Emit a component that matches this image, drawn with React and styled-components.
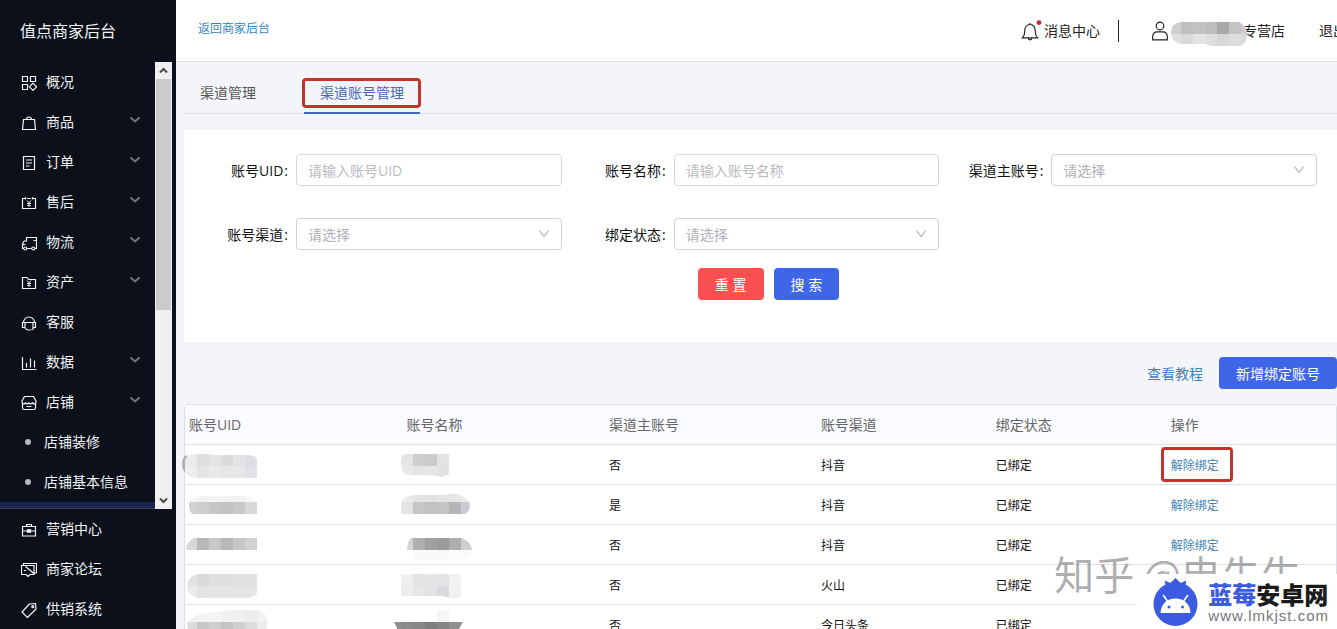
import React, { useId } from 'react';
import styled, { createGlobalStyle } from 'styled-components';

const GlobalStyle = createGlobalStyle`
  *, *::before, *::after { box-sizing: border-box; }
  body {
    margin: 0;
    overflow: hidden;
    font-family: "Open Sans", "Noto Sans CJK SC", sans-serif;
    font-size: 14px;
    line-height: 20px;
    color: #1a1a1a;
    background: #f4f5f9;
  }
  button, input, select { font: inherit; margin: 0; }
  a { text-decoration: none; }
`;

const Shell = styled.div`
  display: flex;
  height: 100vh;
  overflow: hidden;
  position: relative;
`;

/* ---------- sidebar ---------- */

const Sidebar = styled.aside`
  flex: 0 0 176px;
  display: flex;
  flex-direction: column;
  background: #0b101b;
  color: #f2f3f5;
`;

const Brand = styled.div`
  flex: 0 0 62px;
  padding-left: 20px;
  font-size: 16px;
  line-height: 62px;
`;

const MenuViewport = styled.div`
  flex: 1;
  min-height: 0;
  display: flex;
  padding-right: 4px;
`;

const MenuList = styled.nav`
  flex: 1;
  overflow: hidden;
  display: flex;
  flex-direction: column;
  border-bottom: 1px solid #3a3f4b;
`;

const MenuItem = styled.button`
  flex: 0 0 40px;
  display: flex;
  align-items: center;
  gap: 9px;
  width: 100%;
  padding: 0 14px 0 21px;
  border: 0;
  background: none;
  color: inherit;
  text-align: left;
  cursor: pointer;
`;

const MenuLabel = styled.span`
  flex: 1;
`;

const SubItem = styled.a`
  flex: 0 0 40px;
  display: flex;
  align-items: center;
  gap: 13px;
  padding-left: 25px;
  color: inherit;

  &::before {
    content: "";
    width: 6px;
    height: 6px;
    border-radius: 50%;
    background: #b4b8c2;
  }
`;

const ActiveStrip = styled.div`
  flex: 1;
  background: #1a2450;
`;

const Scrollbar = styled.div`
  flex: 0 0 17px;
  display: flex;
  flex-direction: column;
  background: #f0f0f0;
`;

const ScrollArrow = styled.button`
  flex: 0 0 17px;
  display: flex;
  align-items: center;
  justify-content: center;
  padding: 0;
  border: 0;
  background: none;
`;

const ScrollTrack = styled.div`
  flex: 1;
  padding: 0 1px;
`;

const ScrollThumb = styled.div`
  height: 56%;
  background: #cbcbcb;
`;

const BottomMenu = styled.nav`
  flex: 0 0 119px;
  display: flex;
  flex-direction: column;
`;

/* ---------- main ---------- */

const Main = styled.div`
  flex: 1;
  min-width: 0;
  display: flex;
  flex-direction: column;
`;

const Header = styled.header`
  flex: 0 0 62px;
  display: flex;
  align-items: center;
  justify-content: space-between;
  padding-left: 22px;
  overflow: hidden;
  background: #fff;
  border-bottom: 1px solid #dcdde1;
`;

const BackLink = styled.a`
  padding-bottom: 4px;
  font-size: 12px;
  color: #3787bd;
`;

const HeaderNav = styled.div`
  display: flex;
  align-items: center;
  margin-right: -10px;
  white-space: nowrap;
`;

const HeaderItem = styled.button`
  display: flex;
  align-items: center;
  gap: ${(p) => p.$gap || 0}px;
  padding: 0;
  border: 0;
  background: none;
  color: #222;
`;

const Divider = styled.span`
  width: 1px;
  height: 22px;
  margin: 0 33px 0 18px;
  background: #222;
`;

const ShopName = styled.span`
  margin-left: -5px;
  margin-right: 34px;
`;

const Body = styled.main`
  flex: 1;
  padding-left: 8px;
`;

const Tabs = styled.div`
  display: flex;
  gap: 32px;
  height: 52px;
  border-bottom: 1px solid #dfe1e6;
`;

const Tab = styled.button`
  position: relative;
  height: 52px;
  padding: 12px 16px 0;
  border: 0;
  border-bottom: 2px solid ${(p) => (p.$active ? '#4468b8' : 'transparent')};
  background: none;
  color: ${(p) => (p.$active ? '#4468b8' : '#555')};
`;

const Highlight = styled.span`
  position: absolute;
  inset: ${(p) => p.$inset};
  border: 3px solid #c4342c;
  border-radius: 4px;
  pointer-events: none;
`;

const Panel = styled.form`
  margin-top: 16px;
  padding: 24px 20px 42px 0;
  background: #fff;
`;

const Fields = styled.div`
  display: grid;
  grid-template-columns: repeat(3, 1fr);
  row-gap: 32px;
`;

const Field = styled.div`
  display: flex;
  align-items: center;
`;

const FieldLabel = styled.label`
  flex: 0 0 112px;
  padding: 2px 8px 0 0;
  text-align: right;
  color: #111;

  &::after {
    content: ":";
    margin-left: 1px;
  }
`;

const TextInput = styled.input`
  flex: 1;
  min-width: 0;
  height: 32px;
  padding: 0 11px;
  border: 1px solid #d6d7da;
  border-radius: 4px;
  background: #fff;
  outline: 0;

  &::placeholder { color: #b9babd; opacity: 1; }
`;

const SelectWrap = styled.div`
  position: relative;
  flex: 1;
  min-width: 0;

  svg {
    position: absolute;
    right: 12px;
    top: 10px;
    pointer-events: none;
  }
`;

const SelectBox = styled.select`
  display: block;
  width: 100%;
  height: 32px;
  padding: 2px 11px 0;
  border: 1px solid #d0d1d5;
  border-radius: 4px;
  background: #fff;
  color: #b0b1b5;
  appearance: none;
`;

const FormActions = styled.div`
  display: flex;
  justify-content: center;
  gap: 10px;
  margin-top: 18px;
  padding-left: 36px;
`;

const Button = styled.button`
  height: 32px;
  padding: 2px 17px 0;
  border: 0;
  border-radius: 4px;
  background: ${(p) => (p.$danger ? '#fa4f50' : '#3f66e6')};
  color: #fff;
  white-space: pre;
`;

const Toolbar = styled.div`
  display: flex;
  align-items: center;
  justify-content: flex-end;
  gap: 16px;
  padding: 15px 0;
`;

const TextLink = styled.a`
  position: relative;
  color: #3f83b8;
`;

const GuideLink = styled(TextLink)`
  padding-top: 2px;
`;

const TableFrame = styled.div`
  border: 1px solid #dcdee3;
  border-radius: 4px;
  background: #fff;
`;

const Table = styled.table`
  width: 100%;
  table-layout: fixed;
  border-collapse: collapse;
`;

const HeadCell = styled.th`
  width: ${(p) => p.$width};
  height: 39px;
  padding: 2px 4px 0;
  border-bottom: 1px solid #e0e1e5;
  background: #fafbfe;
  color: #666;
  font-weight: 400;
  text-align: left;
`;

const Cell = styled.td`
  height: 40px;
  padding: 4px 4px 0;
  border-bottom: 1px solid #e0e1e5;
  font-size: 12px;
  color: #111;
`;

const MosaicCell = styled(Cell)`
  padding: 0 4px;
`;

const RowMosaic = styled.svg`
  display: block;
  margin-left: -9px;
  overflow: visible;
`;

const NameMosaic = styled.svg`
  position: relative;
  display: block;
  margin: 6px 0 0 3px;
`;

/* ---------- watermarks ---------- */

const AuthorMark = styled.div`
  position: absolute;
  right: 36px;
  bottom: 32px;
  font-family: "Noto Sans CJK SC", sans-serif;
  font-size: 40px;
  line-height: 48px;
  color: rgba(120, 120, 120, 0.6);
  white-space: nowrap;
  pointer-events: none;
`;

const SiteMark = styled.div`
  position: absolute;
  right: 0;
  bottom: 0;
  display: flex;
  align-items: center;
  gap: 10px;
  height: 55px;
  padding: 0 8px 0 16px;
  background: #fff;
`;

const SiteText = styled.div`
  display: flex;
  flex-direction: column;
`;

const SiteName = styled.div`
  font-family: "Noto Sans CJK SC", sans-serif;
  font-size: 24px;
  font-weight: 900;
  line-height: 28px;
  color: #1b1b1b;

  span { color: #3b5be0; }
`;

const SiteUrl = styled.div`
  font-family: "Liberation Sans", sans-serif;
  font-size: 15px;
  line-height: 16px;
  letter-spacing: 1px;
  color: #777;
`;

/* ---------- icons ---------- */

const yen = <path d="M6 5.5l2 2.500 2-2.500M8 8v4M6 8.500h4M6 10.300h4" strokeWidth="0.9" />;

const glyphs = {
  overview: (
    <>
      <path d="M1.500 1.500h5v5h-5zM9.500 1.500h5v5h-5zM1.500 9.500h5v5h-5z" />
      <path d="M12 8.200l3.600 3.600-3.600 3.600-3.600-3.600z" />
    </>
  ),
  goods: <path d="M2.500 4.500h11l1 10h-13zM5.500 4.500a2.500 2.500 0 0 1 5 0" />,
  order: <path d="M2.500 1.500h11v13h-11zM5 5h6M5 8h6M5 11h3.500" />,
  aftersale: (
    <>
      <path d="M4.500 3.500h-3v10h13v-10h-3M6 3.500h4M4.500 2v2.500M11.500 2v2.500" />
      {yen}
    </>
  ),
  logistics: (
    <>
      <path d="M2.300 13.500h-.8v-4.500l1.700-3h2.300v-3.500h10v11h-1.500M6 13.500h4.500M12.500 5.500h3M1.500 9.500h3" />
      <circle cx="4.200" cy="13.500" r="1.500" />
      <circle cx="12.300" cy="13.500" r="1.500" />
    </>
  ),
  assets: (
    <>
      <path d="M1.500 13.500v-11h4.500l1.500 2h7v9z" />
      {yen}
    </>
  ),
  service: (
    <path d="M2.500 7.500a5.500 5.500 0 0 1 11 0M1.500 7.500h2.500v5h-2.500zM12 7.500h2.500v5h-2.500zM3.500 7.500h9M3.500 12.500c1 1.500 2.500 2.500 4.500 2.500M8 15h1.800M13 12.500c-.5 1.200-1.500 2-2.500 2.300" />
  ),
  data: <path d="M1.500 2v12.500h14M5.500 8v4.500M9.500 3.500v9M13.500 5.500v7" />,
  shop: (
    <path d="M3.500 1.500h9l2.500 4.500v1.500a1.800 1.800 0 0 1-3.500 0 1.800 1.800 0 0 1-3.500 0 1.800 1.800 0 0 1-3.500 0 1.800 1.800 0 0 1-3.500 0v-1.500zM1.500 9v4a1.500 1.500 0 0 0 1.500 1.500h10a1.500 1.500 0 0 0 1.500-1.500v-4M5.500 11.500h5" />
  ),
  marketing: (
    <>
      <path d="M1.500 4.500h13v9.500h-13zM5.500 4.500v-2h5v2M1.500 9h4.500M10 9h4.500" />
      <path d="M6.500 7.800h3v2.400h-3z" fill="currentColor" />
    </>
  ),
  forum: (
    <path d="M2.500 4v-2.500h13v9.500h-2M.5 3.500h12.500v9h-4l-2 2-2-2h-4.500zM3 8.500h2M4.500 4.500l9 7.500" />
  ),
  supply: (
    <>
      <path d="M8.500 2l6-.5.500 5.500-8.500 8.500-5.500-5.500z" strokeLinejoin="round" />
      <circle cx="11.800" cy="4.700" r="1" />
    </>
  ),
};

function MenuIcon({ name }) {
  return (
    <svg width="16" height="18" viewBox="0 -2 16 18" fill="none" stroke="currentColor" strokeWidth="1.200" aria-hidden="true">
      {glyphs[name]}
    </svg>
  );
}

function MenuChevron() {
  return (
    <svg width="12" height="14" viewBox="0 0 12 14" fill="none" stroke="#6f7480" strokeWidth="2" aria-hidden="true">
      <path d="M1.500 2.500l4.500 4 4.500-4" />
    </svg>
  );
}

function ArrowGlyph({ up }) {
  return (
    <svg width="9" height="7" viewBox="0 0 9 7" fill="none" stroke="#4a4a4a" strokeWidth="2" aria-hidden="true">
      <path d={up ? 'M1 5.500l3.500-3.500 3.500 3.500' : 'M1 1.500l3.500 3.500 3.500-3.500'} />
    </svg>
  );
}

function SelectChevron() {
  return (
    <svg width="12" height="12" viewBox="0 0 12 12" fill="none" stroke="#b3b4b8" strokeWidth="1.200" aria-hidden="true">
      <path d="M1.500 2.500l4.500 6 4.500-6" />
    </svg>
  );
}

function BellIcon() {
  return (
    <svg width="21" height="22" viewBox="0 0 21 22" fill="none" stroke="#222" strokeWidth="1.200" aria-hidden="true">
      <path d="M1.500 17.800h15c-1.600-1.600-2.200-3.500-2.200-6.300 0-4-1.800-7-5.300-7s-5.300 3-5.300 7c0 2.800-.6 4.700-2.200 6.300zM7.200 18a1.800 1.800 0 0 0 3.600 0M9 4.500v-1.500" />
      <circle cx="18" cy="2.600" r="2.400" fill="#d3242a" stroke="none" />
    </svg>
  );
}

function UserIcon() {
  return (
    <svg width="16" height="20" viewBox="0 0 16 20" fill="none" stroke="#222" strokeWidth="1.200" aria-hidden="true">
      <circle cx="8" cy="5" r="3.800" />
      <path d="M.7 18.800v-3c0-3 1.800-5 4.600-5h5.400c2.800 0 4.600 2 4.600 5v3z" />
    </svg>
  );
}

function SiteLogo() {
  return (
    <svg width="45" height="48" viewBox="0 0 45 48" aria-hidden="true">
      <path d="M13 9l-1.500-6.500 6 2.500 5-5 5 5 6-2.500-1.500 6.500z" fill="#3b5be0" />
      <circle cx="22.500" cy="26" r="22" fill="#3b5be0" />
      <path d="M7.500 35c0-8.500 6.500-14.500 15-14.500s15 6 15 14.500z" fill="#fff" />
      <path d="M14 22.500l-3.500-5M31 22.500l3.500-5" stroke="#fff" strokeWidth="1.600" strokeLinecap="round" />
      <circle cx="16" cy="29" r="1.500" fill="#3b5be0" />
      <circle cx="29.500" cy="29" r="1.500" fill="#3b5be0" />
    </svg>
  );
}

/* A pixelated patch: bands of 12px blocks cut to a soft outline. */
function Mosaic({ as: Svg, width, height, outline, bands, nub }) {
  const id = useId();
  return (
    <Svg width={width} height={height} viewBox={`0 0 ${width} ${height}`} aria-hidden="true">
      <clipPath id={id}>
        <path d={outline} />
      </clipPath>
      {nub && <path d={nub} fill="#aeaeb0" />}
      <g clipPath={`url(#${id})`}>
        {bands.map((b) =>
          b.colors.map((c, i) => (
            <rect key={`${b.y}-${i}`} x={b.x + i * 12} y={b.y} width="12" height="12" fill={c} />
          )),
        )}
      </g>
    </Svg>
  );
}

/* ---------- data ---------- */

const menu = [
  { icon: 'overview', label: '概况' },
  { icon: 'goods', label: '商品', open: true },
  { icon: 'order', label: '订单', open: true },
  { icon: 'aftersale', label: '售后', open: true },
  { icon: 'logistics', label: '物流', open: true },
  { icon: 'assets', label: '资产', open: true },
  { icon: 'service', label: '客服' },
  { icon: 'data', label: '数据', open: true },
  { icon: 'shop', label: '店铺', open: true },
];

const bottomMenu = [
  { icon: 'marketing', label: '营销中心' },
  { icon: 'forum', label: '商家论坛' },
  { icon: 'supply', label: '供销系统' },
];

const fields = [
  { id: 'uid', label: '账号UID', placeholder: '请输入账号UID' },
  { id: 'name', label: '账号名称', placeholder: '请输入账号名称' },
  { id: 'master', label: '渠道主账号', select: true },
  { id: 'channel', label: '账号渠道', select: true },
  { id: 'status', label: '绑定状态', select: true },
];

const columns = [
  ['账号UID', '18.9%'],
  ['账号名称', '17.6%'],
  ['渠道主账号', '18.4%'],
  ['账号渠道', '15.2%'],
  ['绑定状态', '15.2%'],
  ['操作', 'auto'],
];

const rows = [
  {
    master: '否',
    channel: '抖音',
    marked: true,
    uid: {
      nub: 'M7 10q-5 2-5 9t5 9z',
      outline: 'M16 9h12q6 2 20 1h22q6 1 7 4v19h-58q-15 0-15-12t12-12z',
      bands: [
        { x: 5, y: 9, colors: ['#ebebeb', '#e0dddf', '#e4e4e5', '#dbdadc', '#e4e3e5', '#dedfe3'] },
        { x: 5, y: 21, colors: ['#eeeeef', '#e4e4e6', '#e9e9ec', '#e6e6e8', '#e8e8ea', '#e1e2e7'] },
      ],
    },
    name: {
      outline: 'M9 9h42v20q-5 4-14 2l-10-1h-14q-10 0-10-10v-5q0-6 6-6z',
      bands: [
        { x: 3, y: 9, colors: ['#e5e5e5', '#cfcfd0', '#cbcbcc', '#e3e3e4'] },
        { x: 3, y: 21, colors: ['#e9e9e9', '#e4e4e4', '#e6e6e6', '#e2e2e3'] },
      ],
    },
  },
  {
    master: '是',
    channel: '抖音',
    uid: {
      outline: 'M9 17q4-6 14-6h40q10 0 14 6v12h-64q-4-2-4-8z',
      bands: [
        { x: 5, y: 5, colors: ['#f4f4f4', '#f2f2f2', '#f3f3f3', '#f2f2f2', '#f1f1f1', '#f5f5f5'] },
        { x: 5, y: 17, colors: ['#d2d2d3', '#cecece', '#c6c6c6', '#c2c2c3', '#c8c8c8', '#d8d8d8'] },
      ],
    },
    name: {
      outline: 'M3 18q2-8 14-8h30q8-3 15 0 10 4 10 11 0 5-5 8h-64z',
      bands: [
        { x: 3, y: 5, colors: ['#ececec', '#e4e4e4', '#e2e2e2', '#e5e5e5', '#e8e5e9', '#ebe8ee'] },
        { x: 3, y: 17, colors: ['#e4e4e4', '#c6c6c6', '#c2c2c3', '#c4c4c4', '#b7b4b8', '#cccad1'] },
      ],
    },
  },
  {
    master: '否',
    channel: '抖音',
    uid: {
      outline: 'M6 25q0-8 8-12h63v12z',
      bands: [{ x: 5, y: 13, colors: ['#d8d8da', '#b8b8bb', '#c9c8cb', '#b7b6ba', '#c6c6c9', '#d1d1d3'] }],
    },
    name: {
      outline: 'M9 25q0-8 4-12h50q9 2 11 12-2 9-10 10h-48z',
      bands: [
        { x: 3, y: 13, colors: ['#d5d5d5', '#b1b0b1', '#a1a0a1', '#9a9a9b', '#aeaeaf', '#cfcfd1'] },
        { x: 15, y: 25, colors: ['#fafafa', '#fafafa', '#f8f8f8', '#fbfbfb', '#fafafa'] },
      ],
    },
  },
  {
    master: '否',
    channel: '火山',
    uid: {
      outline: 'M17 9h60v19q-3 5-12 5h-46q-12-2-12-11 0-10 10-13z',
      bands: [
        { x: 5, y: 9, colors: ['#e3e3e3', '#dadadb', '#e0e0e0', '#dedede', '#e2e2e3', '#e2e2e3'] },
        { x: 5, y: 21, colors: ['#ebebeb', '#e3e3e3', '#e6e6e6', '#e4e4e4', '#e5e5e6', '#e6e6e8'] },
      ],
    },
    name: {
      outline: 'M3 9h60v22l-4 2h-8l-6-2h-42z',
      bands: [
        { x: 3, y: 9, colors: ['#f0f0f0', '#e3e3e4', '#e5e5e7', '#e4e4e6', '#f2f2f3'] },
        { x: 3, y: 21, colors: ['#ededee', '#e6e6e7', '#e3e3e5', '#dadbde', '#f0f0f1'] },
      ],
    },
  },
  {
    master: '否',
    channel: '今日头条',
    uid: {
      outline: 'M7 17q6-8 22-9l28-4h18q12 3 13 13l-3 12h-76z',
      bands: [
        { x: 5, y: 5, colors: ['#f3f3f3', '#f2f2f2', '#f4f4f4', '#f1f1f1', '#efeff0', '#ececed', '#f1f1f1'] },
        { x: 5, y: 17, colors: ['#dcdcdd', '#c7c6c9', '#cecdd0', '#c4c4c6', '#cfcfd2', '#dcdcde', '#ececed'] },
      ],
    },
    name: {
      outline: 'M-4 17h42v-12h13v12h14l-7 12h-56z',
      bands: [
        { x: 39, y: 5, colors: ['#f6f6f6'] },
        { x: -9, y: 17, colors: ['#8f8f90', '#8a8a8b', '#868687', '#7f7f80', '#858586', '#8f8f90', '#9a9a9b'] },
      ],
    },
  },
];

const shopMosaic = {
  outline: 'M9 0h59q8 4 8 12 0 12-10 12h-26q-6-3-14-2h-16q-10-2-10-12 0-8 9-10z',
  bands: [
    { x: -2, y: 0, colors: ['#cfcfcf', '#bfbfbf', '#c2c2c2', '#bdbdbe', '#a9a8ab', '#c4c4c4', '#cdcdcd'] },
    { x: -2, y: 12, colors: ['#dedede', '#d9d9da', '#e3e3e3', '#dededf', '#d8d8dc', '#dededf', '#dadada'] },
  ],
};

/* ---------- parts ---------- */

function MenuEntry({ item }) {
  return (
    <MenuItem type="button">
      <MenuIcon name={item.icon} />
      <MenuLabel>{item.label}</MenuLabel>
      {item.open && <MenuChevron />}
    </MenuItem>
  );
}

function FilterField({ field }) {
  return (
    <Field>
      <FieldLabel htmlFor={field.id}>{field.label}</FieldLabel>
      {field.select ? (
        <SelectWrap>
          <SelectBox id={field.id} defaultValue="">
            <option value="">请选择</option>
          </SelectBox>
          <SelectChevron />
        </SelectWrap>
      ) : (
        <TextInput id={field.id} type="text" placeholder={field.placeholder} />
      )}
    </Field>
  );
}

export default function App() {
  return (
    <Shell>
      <GlobalStyle />
      <Sidebar>
        <Brand>值点商家后台</Brand>
        <MenuViewport>
          <MenuList>
            {menu.map((item) => (
              <MenuEntry key={item.label} item={item} />
            ))}
            <SubItem href="#decorate">店铺装修</SubItem>
            <SubItem href="#info">店铺基本信息</SubItem>
            <ActiveStrip />
          </MenuList>
          <Scrollbar>
            <ScrollArrow type="button" aria-label="向上">
              <ArrowGlyph up />
            </ScrollArrow>
            <ScrollTrack>
              <ScrollThumb />
            </ScrollTrack>
            <ScrollArrow type="button" aria-label="向下">
              <ArrowGlyph />
            </ScrollArrow>
          </Scrollbar>
        </MenuViewport>
        <BottomMenu>
          {bottomMenu.map((item) => (
            <MenuEntry key={item.label} item={item} />
          ))}
        </BottomMenu>
      </Sidebar>

      <Main>
        <Header>
          <BackLink href="#back">返回商家后台</BackLink>
          <HeaderNav>
            <HeaderItem type="button" $gap={2}>
              <BellIcon />
              消息中心
            </HeaderItem>
            <Divider />
            <HeaderItem type="button">
              <UserIcon />
              <Mosaic as={NameMosaic} width={77} height={24} {...shopMosaic} />
              <ShopName>专营店</ShopName>
            </HeaderItem>
            <HeaderItem type="button">退出</HeaderItem>
          </HeaderNav>
        </Header>

        <Body>
          <Tabs>
            <Tab type="button">渠道管理</Tab>
            <Tab type="button" $active>
              渠道账号管理
              <Highlight $inset="16px -1px 4px -2px" />
            </Tab>
          </Tabs>

          <Panel onSubmit={(e) => e.preventDefault()}>
            <Fields>
              {fields.map((f) => (
                <FilterField key={f.id} field={f} />
              ))}
            </Fields>
            <FormActions>
              <Button type="reset" $danger>重 置</Button>
              <Button type="submit">搜 索</Button>
            </FormActions>
          </Panel>

          <Toolbar>
            <GuideLink href="#guide">查看教程</GuideLink>
            <Button type="button">新增绑定账号</Button>
          </Toolbar>

          <TableFrame>
            <Table>
              <thead>
                <tr>
                  {columns.map(([label, width]) => (
                    <HeadCell key={label} $width={width}>{label}</HeadCell>
                  ))}
                </tr>
              </thead>
              <tbody>
                {rows.map((row, i) => (
                  <tr key={i}>
                    <MosaicCell><Mosaic as={RowMosaic} width={100} height={39} {...row.uid} /></MosaicCell>
                    <MosaicCell><Mosaic as={RowMosaic} width={80} height={39} {...row.name} /></MosaicCell>
                    <Cell>{row.master}</Cell>
                    <Cell>{row.channel}</Cell>
                    <Cell>已绑定</Cell>
                    <Cell>
                      <TextLink href="#unbind">
                        解除绑定
                        {row.marked && <Highlight $inset="-10px -14px -8px -10px" />}
                      </TextLink>
                    </Cell>
                  </tr>
                ))}
              </tbody>
            </Table>
          </TableFrame>
        </Body>
      </Main>

      <AuthorMark>知乎 @电先生</AuthorMark>
      <SiteMark>
        <SiteLogo />
        <SiteText>
          <SiteName><span>蓝莓</span>安卓网</SiteName>
          <SiteUrl>www.lmkjst.com</SiteUrl>
        </SiteText>
      </SiteMark>
    </Shell>
  );
}
